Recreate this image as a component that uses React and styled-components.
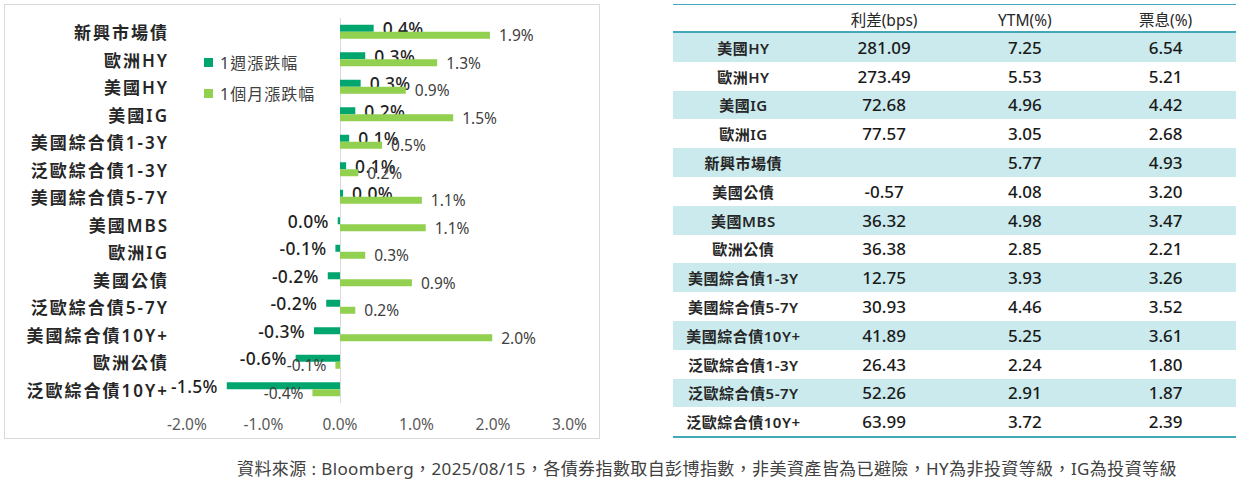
import React from 'react'
import styled, { createGlobalStyle } from 'styled-components'

const DARK = '#00a66e'
const LIGHT = '#92d050'

const GlobalStyle = createGlobalStyle`
    body {
        margin: 0;
        background: #fff;
        font-family: "Noto Sans", "Noto Sans CJK TC", sans-serif;
    }
`

// week / month change in %, labels as printed on the chart
const returns = [
    { name: '新興市場債', week: 0.44, weekLabel: '0.4%', month: 1.96, monthLabel: '1.9%' },
    { name: '歐洲HY', week: 0.33, weekLabel: '0.3%', month: 1.27, monthLabel: '1.3%' },
    { name: '美國HY', week: 0.27, weekLabel: '0.3%', month: 0.86, monthLabel: '0.9%' },
    { name: '美國IG', week: 0.2, weekLabel: '0.2%', month: 1.48, monthLabel: '1.5%' },
    { name: '美國綜合債1-3Y', week: 0.12, weekLabel: '0.1%', month: 0.55, monthLabel: '0.5%' },
    { name: '泛歐綜合債1-3Y', week: 0.08, weekLabel: '0.1%', month: 0.24, monthLabel: '0.2%' },
    { name: '美國綜合債5-7Y', week: 0.04, weekLabel: '0.0%', month: 1.07, monthLabel: '1.1%' },
    { name: '美國MBS', week: -0.03, weekLabel: '0.0%', month: 1.12, monthLabel: '1.1%' },
    { name: '歐洲IG', week: -0.06, weekLabel: '-0.1%', month: 0.33, monthLabel: '0.3%' },
    { name: '美國公債', week: -0.16, weekLabel: '-0.2%', month: 0.94, monthLabel: '0.9%' },
    { name: '泛歐綜合債5-7Y', week: -0.18, weekLabel: '-0.2%', month: 0.2, monthLabel: '0.2%' },
    { name: '美國綜合債10Y+', week: -0.34, weekLabel: '-0.3%', month: 1.99, monthLabel: '2.0%' },
    { name: '歐洲公債', week: -0.58, weekLabel: '-0.6%', month: -0.06, monthLabel: '-0.1%' },
    { name: '泛歐綜合債10Y+', week: -1.48, weekLabel: '-1.5%', month: -0.36, monthLabel: '-0.4%' },
]

const spreads = [
    ['美國HY', '281.09', '7.25', '6.54'],
    ['歐洲HY', '273.49', '5.53', '5.21'],
    ['美國IG', '72.68', '4.96', '4.42'],
    ['歐洲IG', '77.57', '3.05', '2.68'],
    ['新興市場債', '', '5.77', '4.93'],
    ['美國公債', '-0.57', '4.08', '3.20'],
    ['美國MBS', '36.32', '4.98', '3.47'],
    ['歐洲公債', '36.38', '2.85', '2.21'],
    ['美國綜合債1-3Y', '12.75', '3.93', '3.26'],
    ['美國綜合債5-7Y', '30.93', '4.46', '3.52'],
    ['美國綜合債10Y+', '41.89', '5.25', '3.61'],
    ['泛歐綜合債1-3Y', '26.43', '2.24', '1.80'],
    ['泛歐綜合債5-7Y', '52.26', '2.91', '1.87'],
    ['泛歐綜合債10Y+', '63.99', '3.72', '2.39'],
]

// plot geometry, in page pixels (the svg viewBox matches the page)
const ZERO = 340
const UNIT = 76.5
const TOP = 18
const BAND = 27.5
const BAR = 7
const GAP = 9
const ticks = [-2, -1, 0, 1, 2, 3]

function Bar({ value, label, y, color, big }) {
    const end = ZERO + value * UNIT
    const x = Math.min(ZERO, end)
    const w = Math.abs(end - ZERO)
    const pos = value >= 0
    return (
        <g>
            <rect x={x} y={y} width={w} height={BAR} fill={color} />
            <DataLabel
                x={pos ? end + GAP : end - GAP}
                y={y + BAR / 2}
                textAnchor={pos ? 'start' : 'end'}
                dominantBaseline="central"
                $big={big}
            >
                {label}
            </DataLabel>
        </g>
    )
}

function ReturnsChart() {
    return (
        <ChartPanel>
            <CategoryList>
                {returns.map((r) => (
                    <CategoryLabel key={r.name}>{r.name}</CategoryLabel>
                ))}
            </CategoryList>
            <Plot width="430" height="433" viewBox="169 5 430 433">
                <line x1={ZERO + 0.5} x2={ZERO + 0.5} y1={TOP} y2={TOP + BAND * returns.length} stroke="#d9d9d9" strokeWidth="1" />
                {returns.map((r, i) => {
                    const mid = TOP + (i + 0.5) * BAND
                    return (
                        <g key={r.name}>
                            <Bar value={r.week} label={r.weekLabel} y={mid - BAR} color={DARK} big />
                            <Bar value={r.month} label={r.monthLabel} y={mid} color={LIGHT} />
                        </g>
                    )
                })}
                {ticks.map((t) => (
                    <TickLabel key={t} x={ZERO + t * UNIT} y={424} textAnchor="middle" dominantBaseline="central">
                        {t.toFixed(1)}%
                    </TickLabel>
                ))}
            </Plot>
            <Legend>
                <LegendItem>
                    <Swatch $color={DARK} />
                    1週漲跌幅
                </LegendItem>
                <LegendItem>
                    <Swatch $color={LIGHT} />
                    1個月漲跌幅
                </LegendItem>
            </Legend>
        </ChartPanel>
    )
}

function SpreadTable() {
    return (
        <Table>
            <thead>
                <tr>
                    <Th></Th>
                    <Th>利差(bps)</Th>
                    <Th>YTM(%)</Th>
                    <Th>票息(%)</Th>
                </tr>
            </thead>
            <tbody>
                {spreads.map((row, i) => (
                    <Row key={row[0]} $shaded={i % 2 === 0}>
                        <NameCell>{row[0]}</NameCell>
                        <NumCell>{row[1]}</NumCell>
                        <NumCell>{row[2]}</NumCell>
                        <NumCell>{row[3]}</NumCell>
                    </Row>
                ))}
            </tbody>
        </Table>
    )
}

export default function App() {
    return (
        <Page>
            <GlobalStyle />
            <Main>
                <ReturnsChart />
                <SpreadTable />
            </Main>
            <Footer>資料來源 : Bloomberg，2025/08/15，各債券指數取自彭博指數，非美資產皆為已避險，HY為非投資等級，IG為投資等級</Footer>
        </Page>
    )
}

const Page = styled.div`
    padding: 4px 0 0 4px;
`

const Main = styled.div`
    display: flex;
    align-items: flex-start;
    gap: 73px;
`

const ChartPanel = styled.div`
    position: relative;
    display: flex;
    width: 596px;
    height: 435px;
    box-sizing: border-box;
    border: 1px solid #d9d9d9;
    background: #fff;
`

const CategoryList = styled.div`
    display: flex;
    flex-direction: column;
    width: 164px;
    padding-top: 13px;
`

const CategoryLabel = styled.div`
    display: flex;
    align-items: center;
    justify-content: flex-end;
    height: ${BAND}px;
    font-size: 17px;
    font-weight: 600;
    letter-spacing: 2px;
    color: #262626;
    white-space: nowrap;
`

const Plot = styled.svg`
    display: block;
    overflow: visible;
`

const DataLabel = styled.text`
    font-family: "Noto Sans", "Noto Sans CJK TC", sans-serif;
    font-size: ${(p) => (p.$big ? '17.5px' : '15.5px')};
    font-weight: ${(p) => (p.$big ? 500 : 400)};
    letter-spacing: ${(p) => (p.$big ? '0.3px' : '0')};
    fill: ${(p) => (p.$big ? '#1f1f1f' : '#404040')};
`

const TickLabel = styled.text`
    font-family: "Noto Sans", "Noto Sans CJK TC", sans-serif;
    font-size: 15.5px;
    fill: #595959;
`

const Legend = styled.div`
    position: absolute;
    left: 199px;
    top: 47px;
    display: flex;
    flex-direction: column;
    gap: 11px;
`

const LegendItem = styled.div`
    display: flex;
    align-items: center;
    gap: 7px;
    height: 20px;
    font-size: 16px;
    letter-spacing: 1px;
    color: #404040;
`

const Swatch = styled.span`
    width: 9px;
    height: 9px;
    background: ${(p) => p.$color};
`

const Table = styled.table`
    width: 563px;
    table-layout: fixed;
    border-collapse: separate;
    border-spacing: 0;
    border-top: 1.5px solid #45a8b8;
    border-bottom: 2px solid #45a8b8;
`

const Th = styled.th`
    box-sizing: border-box;
    height: 28px;
    padding: 3px 0 0;
    border-bottom: 2px solid #45a8b8;
    font-size: 15.5px;
    font-weight: 400;
    line-height: 20px;
    color: #262626;
    text-align: center;
    vertical-align: middle;
`

const Row = styled.tr`
    background: ${(p) => (p.$shaded ? '#cbeaed' : '#fff')};
`

const NameCell = styled.td`
    height: 28.8px;
    padding: 0;
    text-align: center;
    font-size: 15px;
    font-weight: 600;
    letter-spacing: 0.5px;
    color: #262626;
    white-space: nowrap;
`

const NumCell = styled.td`
    height: 28.8px;
    padding: 0;
    text-align: center;
    font-size: 17px;
    font-weight: 500;
    color: #1a1a1a;
`

const Footer = styled.div`
    margin-top: 18px;
    padding-left: 233px;
    line-height: 24px;
    font-size: 17px;
    letter-spacing: 0.4px;
    color: #404040;
    white-space: nowrap;
`
